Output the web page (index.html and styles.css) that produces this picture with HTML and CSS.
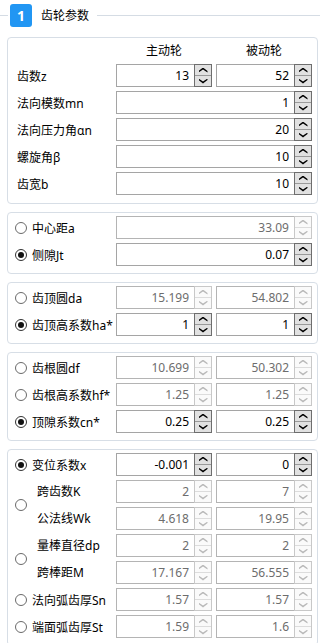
FILE: index.html
```html
<html>
	<head>
		<title>齿轮参数</title>
		<link rel="stylesheet" href="styles.css">
	</head>
	<body>
		<div id="panel">
			<div class="title"><span class="num">1</span><span class="name">齿轮参数</span></div>

			<div class="group g1">
				<div></div>
				<div class="colhead">主动轮</div>
				<div class="colhead">被动轮</div>

				<div class="lbl">齿数z</div>
				<div class="spin"><span class="val">13</span><span class="btns"><i class="up"></i><i class="dn"></i></span></div>
				<div class="spin"><span class="val">52</span><span class="btns"><i class="up"></i><i class="dn"></i></span></div>

				<div class="lbl">法向模数mn</div>
				<div class="spin wide"><span class="val">1</span><span class="btns"><i class="up"></i><i class="dn"></i></span></div>

				<div class="lbl">法向压力角αn</div>
				<div class="spin wide"><span class="val">20</span><span class="btns"><i class="up"></i><i class="dn"></i></span></div>

				<div class="lbl">螺旋角β</div>
				<div class="spin wide"><span class="val">10</span><span class="btns"><i class="up"></i><i class="dn"></i></span></div>

				<div class="lbl">齿宽b</div>
				<div class="spin wide"><span class="val">10</span><span class="btns"><i class="up"></i><i class="dn"></i></span></div>
			</div>

			<div class="group">
				<div class="lbl r"><span class="radio"></span>中心距a</div>
				<div class="spin wide dis"><span class="val">33.09</span><span class="btns"><i class="up"></i><i class="dn"></i></span></div>

				<div class="lbl r"><span class="radio on"></span>侧隙Jt</div>
				<div class="spin wide"><span class="val">0.07</span><span class="btns"><i class="up"></i><i class="dn"></i></span></div>
			</div>

			<div class="group">
				<div class="lbl r"><span class="radio"></span>齿顶圆da</div>
				<div class="spin dis"><span class="val">15.199</span><span class="btns"><i class="up"></i><i class="dn"></i></span></div>
				<div class="spin dis"><span class="val">54.802</span><span class="btns"><i class="up"></i><i class="dn"></i></span></div>

				<div class="lbl r"><span class="radio on"></span>齿顶高系数ha*</div>
				<div class="spin"><span class="val">1</span><span class="btns"><i class="up"></i><i class="dn"></i></span></div>
				<div class="spin"><span class="val">1</span><span class="btns"><i class="up"></i><i class="dn"></i></span></div>
			</div>

			<div class="group">
				<div class="lbl r"><span class="radio"></span>齿根圆df</div>
				<div class="spin dis"><span class="val">10.699</span><span class="btns"><i class="up"></i><i class="dn"></i></span></div>
				<div class="spin dis"><span class="val">50.302</span><span class="btns"><i class="up"></i><i class="dn"></i></span></div>

				<div class="lbl r"><span class="radio"></span>齿根高系数hf*</div>
				<div class="spin dis"><span class="val">1.25</span><span class="btns"><i class="up"></i><i class="dn"></i></span></div>
				<div class="spin dis"><span class="val">1.25</span><span class="btns"><i class="up"></i><i class="dn"></i></span></div>

				<div class="lbl r"><span class="radio on"></span>顶隙系数cn*</div>
				<div class="spin"><span class="val">0.25</span><span class="btns"><i class="up"></i><i class="dn"></i></span></div>
				<div class="spin"><span class="val">0.25</span><span class="btns"><i class="up"></i><i class="dn"></i></span></div>
			</div>

			<div class="group last">
				<div class="lbl r"><span class="radio on"></span>变位系数x</div>
				<div class="spin"><span class="val">-0.001</span><span class="btns"><i class="up"></i><i class="dn"></i></span></div>
				<div class="spin"><span class="val">0</span><span class="btns"><i class="up"></i><i class="dn"></i></span></div>

				<div class="lbl2"><span class="radio"></span><span class="sub"><span>跨齿数K</span><span>公法线Wk</span></span></div>
				<div class="spin dis"><span class="val">2</span><span class="btns"><i class="up"></i><i class="dn"></i></span></div>
				<div class="spin dis"><span class="val">7</span><span class="btns"><i class="up"></i><i class="dn"></i></span></div>
				<div class="spin dis"><span class="val">4.618</span><span class="btns"><i class="up"></i><i class="dn"></i></span></div>
				<div class="spin dis"><span class="val">19.95</span><span class="btns"><i class="up"></i><i class="dn"></i></span></div>

				<div class="lbl2"><span class="radio"></span><span class="sub"><span>量棒直径dp</span><span>跨棒距M</span></span></div>
				<div class="spin dis"><span class="val">2</span><span class="btns"><i class="up"></i><i class="dn"></i></span></div>
				<div class="spin dis"><span class="val">2</span><span class="btns"><i class="up"></i><i class="dn"></i></span></div>
				<div class="spin dis"><span class="val">17.167</span><span class="btns"><i class="up"></i><i class="dn"></i></span></div>
				<div class="spin dis"><span class="val">56.555</span><span class="btns"><i class="up"></i><i class="dn"></i></span></div>

				<div class="lbl r"><span class="radio"></span>法向弧齿厚Sn</div>
				<div class="spin dis"><span class="val">1.57</span><span class="btns"><i class="up"></i><i class="dn"></i></span></div>
				<div class="spin dis"><span class="val">1.57</span><span class="btns"><i class="up"></i><i class="dn"></i></span></div>

				<div class="lbl r"><span class="radio"></span>端面弧齿厚St</div>
				<div class="spin dis"><span class="val">1.59</span><span class="btns"><i class="up"></i><i class="dn"></i></span></div>
				<div class="spin dis"><span class="val">1.6</span><span class="btns"><i class="up"></i><i class="dn"></i></span></div>
			</div>
		</div>
	</body>
</html>
```

FILE: styles.css
```css
body{
	margin: 0;
	font-family: "Noto Sans", "Noto Sans CJK SC", sans-serif;
	font-size: 12px;
	color: #000;
	background-color: #fff;
	overflow: hidden;
}
#panel{
	width: 320px;
	height: 643px;
	overflow: hidden;
}
.title{
	display: flex;
	align-items: center;
	height: 30px;
	margin-bottom: 7px;
}
.title::before{
	content: "";
	width: 8px;
	height: 1px;
	background-color: #d5dce4;
}
.title::after{
	content: "";
	flex: 1;
	height: 1px;
	margin-left: 8px;
	background-color: #d5dce4;
}
.num{
	width: 22px;
	height: 23px;
	margin-left: 2px;
	border-radius: 3px;
	background-color: #2196f3;
	color: #fff;
	font-size: 14px;
	font-weight: bold;
	display: flex;
	align-items: center;
	justify-content: center;
}
.name{
	margin-left: 9px;
}
.group{
	width: 311px;
	box-sizing: border-box;
	margin: 0 0 8px 7px;
	padding: 3px 5px 7px 0;
	border: 1px solid #d7dee6;
	border-radius: 4px;
	display: grid;
	grid-template-columns: 104px 96px 96px;
	grid-auto-rows: 23px;
	column-gap: 4px;
	row-gap: 4px;
}
.g1{
	grid-template-rows: 19px;
	padding-bottom: 8px;
}
.colhead{
	text-align: center;
	line-height: 19px;
}
.lbl{
	padding-left: 9px;
	display: flex;
	align-items: center;
	white-space: nowrap;
}
.lbl.r{
	padding-left: 7px;
}
.radio{
	width: 12px;
	height: 12px;
	box-sizing: border-box;
	border: 1px solid #6a6a6a;
	border-radius: 50%;
	margin-right: 5px;
	flex: none;
	display: flex;
	align-items: center;
	justify-content: center;
}
.radio.on{
	border-color: #333;
}
.radio.on::after{
	content: "";
	width: 6px;
	height: 6px;
	border-radius: 50%;
	background-color: #111;
}
.lbl2{
	grid-row: span 2;
	padding-left: 7px;
	display: flex;
	align-items: center;
	white-space: nowrap;
}
.lbl2 .radio{
	margin-right: 10px;
}
.sub{
	display: flex;
	flex-direction: column;
	gap: 4px;
}
.sub span{
	height: 23px;
	line-height: 23px;
}
.spin{
	display: flex;
	box-sizing: border-box;
	border: 1px solid #a5a5a5;
	background-color: #fff;
}
.spin.wide{
	grid-column: span 2;
}
.val{
	flex: 1;
	text-align: right;
	padding-right: 5px;
	line-height: 21px;
}
.btns{
	width: 18px;
	box-sizing: border-box;
	margin: -1px -1px -1px 0;
	border: 1px solid #6e6e6e;
	background-color: #e1e1e1;
	display: flex;
	flex-direction: column;
}
.btns i{
	flex: 1;
	display: flex;
	align-items: center;
	justify-content: center;
}
.btns i + i{
	border-top: 1px solid #9a9a9a;
}
.btns i::before{
	content: "";
	width: 9px;
	height: 5px;
	background-color: #000;
}
.up::before{
	clip-path: polygon(0 70%, 50% 0, 100% 70%, 100% 100%, 50% 40%, 0 100%);
}
.dn::before{
	clip-path: polygon(0 30%, 50% 100%, 100% 30%, 100% 0, 50% 60%, 0 0);
}
.dis{
	border-color: #b4b4b4;
}
.dis .val{
	color: #6d6d6d;
}
.dis .btns{
	border-color: #c8c8c8;
	background-color: #fafafa;
}
.dis .btns i + i{
	border-top-color: #dcdcdc;
}
.dis .btns i::before{
	background-color: #b9b9b9;
}
```
